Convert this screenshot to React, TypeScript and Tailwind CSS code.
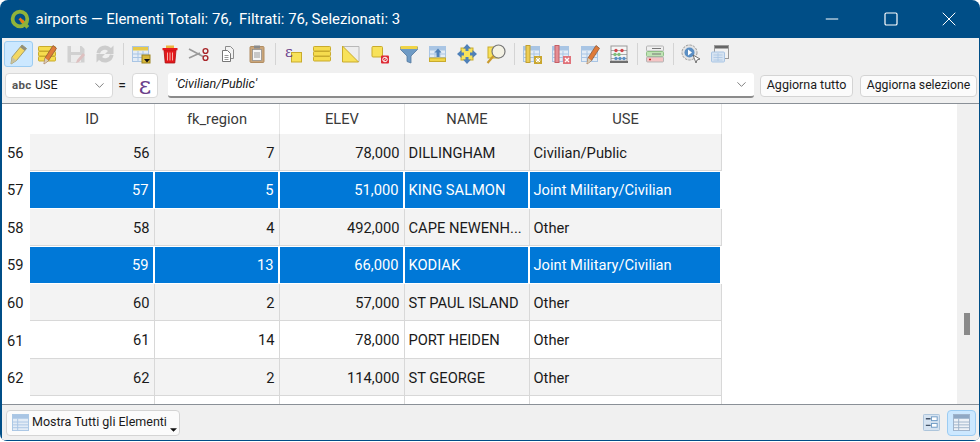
import React from 'react'
import { ChevronDown, Minus, Square, X } from 'lucide-react'

type Row = { n: number; region: number; elev: string; name: string; use: string; selected?: boolean; tint?: boolean }

const rows: Row[] = [
  { n: 56, region: 7, elev: '78,000', name: 'DILLINGHAM', use: 'Civilian/Public', tint: true },
  { n: 57, region: 5, elev: '51,000', name: 'KING SALMON', use: 'Joint Military/Civilian', selected: true },
  { n: 58, region: 4, elev: '492,000', name: 'CAPE NEWENH...', use: 'Other', tint: true },
  { n: 59, region: 13, elev: '66,000', name: 'KODIAK', use: 'Joint Military/Civilian', selected: true },
  { n: 60, region: 2, elev: '57,000', name: 'ST PAUL ISLAND', use: 'Other', tint: true },
  { n: 61, region: 14, elev: '78,000', name: 'PORT HEIDEN', use: 'Other' },
  { n: 62, region: 2, elev: '114,000', name: 'ST GEORGE', use: 'Other', tint: true },
]

const Icon: React.FC<{ children: React.ReactNode; faded?: boolean }> = ({ children, faded }) => (
  <svg viewBox="0 0 22 22" className={`h-[22px] w-[22px] ${faded ? 'opacity-25' : ''}`}>
    {children}
  </svg>
)

const Tool: React.FC<{ children: React.ReactNode; active?: boolean }> = ({ children, active }) => (
  <div className={`flex h-[26px] w-[29px] shrink-0 items-center justify-center rounded-[3px] ${active ? 'border border-[#9cccf2] bg-[#cce8ff]' : ''}`}>
    {children}
  </div>
)

const Sep = () => (
  <div className="flex w-[7px] shrink-0 justify-center">
    <div className="h-[22px] w-px bg-[#d4d4d4]" />
  </div>
)

const Pencil = () => (
  <g>
    <path d="M4 21l1-7L15 2l4.500 3.500L9.500 17.500z" fill="#f3d862" stroke="#9b9468" strokeWidth=".9" />
    <path d="M4 21l1-7 4.500 3.500z" fill="#c9c2a0" />
    <path d="M15 2l4.500 3.500-1.800 2.200-4.500-3.500z" fill="#8f8f80" />
  </g>
)

const RedPencil = () => (
  <g>
    <path d="M8 21l1-6L17 2.500l3.500 2.800-8 12.200z" fill="#e07b39" stroke="#8f5a3a" strokeWidth=".8" />
    <path d="M8 21l1-6 3.500 2.500z" fill="#d8cdb5" />
  </g>
)

const YellowRows = () => (
  <g fill="#f6dc4e" stroke="#c9ab2c" strokeWidth="1">
    <rect x="2.500" y="3.500" width="17" height="4.500" rx=".8" />
    <rect x="2.500" y="8.500" width="17" height="4.500" rx=".8" />
    <rect x="2.500" y="13.500" width="17" height="4.500" rx=".8" />
  </g>
)

const TableBase = ({ head = '#a9c5e4' }: { head?: string }) => (
  <g>
    <rect x="2.500" y="3.500" width="16" height="15" fill="#e3ecf6" stroke="#a9c5e4" />
    <rect x="3" y="4" width="15" height="3.500" fill={head} />
    <path d="M3 11h15M3 14.500h15M8 8v10M13 8v10" stroke="#a9c5e4" strokeWidth="1" />
  </g>
)

export default function App() {
  return (
    <div className="h-[442px] w-[980px] overflow-hidden bg-white font-['Roboto',sans-serif] text-[14.700px] text-[#1a1a1a]">
      <div className="flex h-[441px] w-[980px] flex-col overflow-hidden rounded-t-[8px] rounded-b-[7px] bg-[#004e87] px-[1.500px] pb-[1px]">
        {/* Title bar */}
        <div className="flex h-[38px] shrink-0 items-center text-white">
          <svg viewBox="0 0 20 20" className="ml-[8px] h-[21px] w-[21px] shrink-0">
            <circle cx="9.500" cy="9.500" r="7" fill="none" stroke="#8fb33a" strokeWidth="3.600" />
            <path d="M11 11l6 6.500" stroke="#8fb33a" strokeWidth="3.600" />
            <path d="M9 9l4 4" stroke="#ee7913" strokeWidth="2.500" />
          </svg>
          <span className="mt-[1px] ml-[5px] text-[14.950px] whitespace-pre">airports — Elementi Totali: 76,  Filtrati: 76, Selezionati: 3</span>
          <div className="ml-auto flex items-center text-white">
            <div className="flex w-[58.500px] justify-center"><Minus size={20} strokeWidth={1.200} /></div>
            <div className="flex w-[58.500px] justify-center"><Square size={16} strokeWidth={1.800} /></div>
            <div className="flex w-[58.500px] justify-center"><X size={24} strokeWidth={1} /></div>
          </div>
        </div>

        {/* Toolbar */}
        <div className="flex h-[32px] shrink-0 items-center bg-[#f0f0f0] pl-[2px]">
          <Tool active><Icon><Pencil /></Icon></Tool>
          <Tool><Icon><YellowRows /><RedPencil /></Icon></Tool>
          <Tool>
            <Icon faded>
              <path d="M2.500 3h14l3 3v13.500h-17z" fill="#777" />
              <rect x="6" y="3" width="9" height="6" fill="#eee" />
              <rect x="6" y="12" width="10" height="7" fill="#ddd" />
              <path d="M11 20l1-3 6-7 2 2-6 7z" fill="#a33" />
            </Icon>
          </Tool>
          <Tool>
            <Icon faded>
              <path d="M2.500 10a8.500 8.500 0 0 1 14.500-5l2.500-2.500V11h-8.500l3-3a4.800 4.800 0 0 0-8 2.500zM19.500 12a8.500 8.500 0 0 1-14.500 5l-2.500 2.500V11H11l-3 3a4.800 4.800 0 0 0 8-2.500z" fill="#666" />
            </Icon>
          </Tool>
          <Sep />
          <Tool>
            <Icon>
              <TableBase head="#e8c94a" />
              <rect x="12" y="12" width="8" height="8" fill="#d9b83a" stroke="#9c8420" />
              <path d="M14 16l3 3.500 3-3.500z" fill="#111" />
            </Icon>
          </Tool>
          <Tool>
            <Icon>
              <path d="M5 7h12l-1.200 13H6.200z" fill="#e4181c" stroke="#a80f12" strokeWidth=".8" />
              <path d="M8.500 9.500v8M11 9.500v8M13.500 9.500v8" stroke="#f7b0a8" strokeWidth="1" />
              <path d="M3.500 5h15v2.200h-15z" fill="#e4181c" />
              <path d="M7 2.500h8V5H7z" fill="#eeb43c" />
            </Icon>
          </Tool>
          <Tool>
            <Icon>
              <path d="M1 6l14 7.500M1 15l11-5" stroke="#9a9a9a" strokeWidth="1.700" />
              <circle cx="17.500" cy="8" r="2.400" fill="none" stroke="#a8262a" strokeWidth="1.400" />
              <circle cx="17.500" cy="15" r="2.400" fill="none" stroke="#a8262a" strokeWidth="1.400" />
            </Icon>
          </Tool>
          <Tool>
            <Icon>
              <path d="M8.500 3.500h5l3 3v9h-8z" fill="#f2f2f2" stroke="#8c8c8c" />
              <path d="M5.500 7.500h5l3 3v8h-8z" fill="#fff" stroke="#777" />
              <path d="M7.500 12.500h4M7.500 14.500h4M7.500 16.500h4" stroke="#999" />
            </Icon>
          </Tool>
          <Tool>
            <Icon>
              <rect x="4" y="3.500" width="14" height="16" rx="1" fill="#c9a57a" stroke="#b18d62" />
              <rect x="6.500" y="6.500" width="9" height="11" fill="#f5f5f5" stroke="#888" strokeWidth=".7" />
              <rect x="8" y="2.500" width="6" height="3" fill="#8a8a8a" />
              <path d="M8 10h6M8 12h6M8 14h6" stroke="#999" />
            </Icon>
          </Tool>
          <Sep />
          <Tool>
            <Icon>
              <rect x="9.500" y="9.500" width="10" height="9.500" fill="#f8e25a" stroke="#c9ab2c" />
              <text x="3" y="14" fontSize="15" fontFamily="'DejaVu Serif', serif" fill="#6b3f8a">ε</text>
            </Icon>
          </Tool>
          <Tool><Icon><YellowRows /></Icon></Tool>
          <Tool>
            <Icon>
              <path d="M3 3.500h16v15H3z" fill="#ededed" stroke="#b8b8b8" />
              <path d="M2.500 3l16 16h-16z" fill="#f8e25a" stroke="#c9ab2c" />
            </Icon>
          </Tool>
          <Tool>
            <Icon>
              <rect x="3" y="3.500" width="10.500" height="10.500" rx="1" fill="#f8e25a" stroke="#c9ab2c" />
              <rect x="12" y="12.500" width="8" height="8" rx="1" fill="#dd2a34" />
              <circle cx="16" cy="16.500" r="2.300" fill="none" stroke="#fff" />
              <path d="M14.500 18l3-3" stroke="#fff" />
            </Icon>
          </Tool>
          <Tool>
            <Icon>
              <path d="M2.500 4h17v2.500L13 13v7l-4-1.500V13L2.500 6.500z" fill="#6f9bc5" stroke="#54799e" strokeWidth=".8" />
              <rect x="2.500" y="3" width="17" height="3" fill="#f0d447" />
            </Icon>
          </Tool>
          <Tool>
            <Icon>
              <TableBase />
              <path d="M11 5.500l3.500 4H12.500v4.500h-3V9.500H7.500z" fill="#4f80b8" />
              <rect x="2.500" y="15" width="16" height="3.500" fill="#f0d447" stroke="#c9ab2c" />
            </Icon>
          </Tool>
          <Tool>
            <Icon>
              <rect x="5" y="5" width="12" height="12" fill="#f8e25a" stroke="#c9ab2c" />
              <path d="M11 1l4 4.500h-2.500V8h-3V5.500H7zM11 21l-4-4.500h2.500V14h3v2.500H15zM1 11l4.500-4v2.500H8v3H5.500V15zM21 11l-4.500 4v-2.500H14v-3h2.500V7z" fill="#4f80b8" />
            </Icon>
          </Tool>
          <Tool>
            <Icon>
              <rect x="3" y="4" width="11" height="11" fill="#f8e25a" stroke="#c9ab2c" />
              <circle cx="13.500" cy="8.500" r="6.500" fill="#f3f1e4" stroke="#777" strokeWidth="1.200" />
              <path d="M8.500 13L2.500 20" stroke="#c99a2e" strokeWidth="2.200" />
            </Icon>
          </Tool>
          <Sep />
          <Tool>
            <Icon>
              <TableBase />
              <rect x="5" y="2.500" width="4" height="17" fill="#eccd55" stroke="#c1a030" />
              <rect x="13" y="13" width="8" height="8" fill="#c9a62e" />
              <path d="M17 14.500v5M14.500 17h5M15 15l4 4M19 15l-4 4" stroke="#fff" />
            </Icon>
          </Tool>
          <Tool>
            <Icon>
              <TableBase />
              <rect x="5" y="2.500" width="4" height="17" fill="#e58e94" stroke="#c45f66" />
              <rect x="13" y="13" width="8" height="8" fill="#e0737b" />
              <path d="M15 15l4 4M19 15l-4 4" stroke="#fff" strokeWidth="1.400" />
            </Icon>
          </Tool>
          <Tool><Icon><TableBase /><RedPencil /></Icon></Tool>
          <Tool>
            <Icon>
              <rect x="3" y="3" width="16" height="15" fill="#f5f5f5" stroke="#999" />
              <path d="M3 7.500h16M3 11.500h16M3 15.500h16" stroke="#888" strokeWidth=".7" />
              <circle cx="8" cy="7.500" r="1.700" fill="#d0454a" /><circle cx="14" cy="7.500" r="1.700" fill="#d0454a" />
              <circle cx="7" cy="11.500" r="1.700" fill="#7fbf7a" /><circle cx="11" cy="11.500" r="1.700" fill="#7fbf7a" />
              <circle cx="8" cy="15.500" r="1.700" fill="#5c92c7" /><circle cx="12" cy="15.500" r="1.700" fill="#5c92c7" /><circle cx="16" cy="15.500" r="1.700" fill="#5c92c7" />
              <rect x="2" y="18" width="18" height="2" fill="#6e6e6e" />
            </Icon>
          </Tool>
          <Sep />
          <Tool>
            <Icon>
              <rect x="2.500" y="3" width="17" height="5" rx="1" fill="#f0f0f0" stroke="#b5b5b5" />
              <rect x="2.500" y="8.500" width="17" height="5" rx="1" fill="#bfe3b4" stroke="#8fbe86" />
              <rect x="2.500" y="14" width="17" height="5" rx="1" fill="#f4c4c4" stroke="#b5b5b5" />
              <path d="M8 5.500h9M8 11h9" stroke="#777" strokeWidth="1.200" /><path d="M5 16.500h2" stroke="#c4262c" strokeWidth="1.500" />
            </Icon>
          </Tool>
          <Sep />
          <Tool>
            <Icon>
              <circle cx="9.500" cy="9.500" r="7.500" fill="#e4e4e4" stroke="#9a9a9a" strokeDasharray="2.500 1" />
              <circle cx="9.500" cy="9.500" r="5" fill="#5b8fc4" />
              <path d="M8 6.500l4 3-4 3z" fill="#fff" />
              <path d="M13 12l7 4-3 1-1 3z" fill="#fff" stroke="#555" strokeWidth=".8" />
            </Icon>
          </Tool>
          <Tool>
            <Icon>
              <rect x="5.500" y="2.500" width="14" height="13" fill="#f2f2f2" stroke="#9a9a9a" />
              <rect x="6" y="3" width="13" height="2.500" fill="#666" />
              <rect x="2.500" y="9" width="13" height="10" rx="1" fill="#d6e3f1" stroke="#a9c5e4" />
              <path d="M4.500 12h9M4.500 14.500h9M4.500 17h9M9 10v8" stroke="#a9c5e4" strokeWidth=".8" />
            </Icon>
          </Tool>
        </div>

        {/* Field update row */}
        <div className="flex h-[33px] shrink-0 items-center bg-[#f0f0f0] pt-[3px] pb-[5px] pl-[3.500px] text-[12.500px]">
          <div className="flex h-[25px] w-[108px] items-center rounded-[4px] border border-[#d9d9d9] bg-white pr-[5px] pl-[6px]">
            <span className="text-[11.500px] font-bold tracking-[0.3px] text-[#555]">abc</span>
            <span className="ml-[3.500px] text-[12.500px]">USE</span>
            <ChevronDown size={15} strokeWidth={1.200} className="ml-auto text-[#555]" />
          </div>
          <span className="ml-[4px] w-[10px] text-center text-[14px]">=</span>
          <div className="ml-[5px] flex h-[25px] w-[26px] items-center justify-center rounded-[4px] border border-[#d9d9d9] bg-white font-['DejaVu_Serif',serif] text-[24px] leading-none text-[#6b3f8a]">ε</div>
          <div className="ml-[10px] flex h-[25px] w-[586px] items-center rounded-[3px] border-b-2 border-[#8b8b8b] bg-white pr-[5px] pl-[7px] text-[12.600px] italic">
            'Civilian/Public'
            <ChevronDown size={15} strokeWidth={1.200} className="ml-auto text-[#555]" />
          </div>
          <div className="ml-[6px] flex h-[22px] w-[93px] items-center justify-center rounded-[4px] border border-[#d4d4d4] bg-[#fbfbfb]">Aggiorna tutto</div>
          <div className="ml-[7px] flex h-[22px] w-[117px] items-center justify-center rounded-[4px] border border-[#d4d4d4] bg-[#fbfbfb] text-[12.200px]">Aggiorna selezione</div>
        </div>

        {/* Attribute table */}
        <div className="flex min-h-0 flex-1 flex-col overflow-hidden border-y border-[#8a9097] bg-white">
          <div className="flex min-h-0 flex-1">
            <div className="min-w-0 flex-1 overflow-hidden">
              <div className="flex h-[29.500px] text-center text-[#3a3a3a]">
                <div className="w-[28.500px] shrink-0" />
                {['ID', 'fk_region', 'ELEV', 'NAME'].map(h => (
                  <div key={h} className="flex w-[125px] shrink-0 items-center justify-center border-r border-[#e6e6e6]">{h}</div>
                ))}
                <div className="flex w-[192px] shrink-0 items-center justify-center border-r border-[#e6e6e6]">USE</div>
              </div>
              {rows.map(r => {
                const cell = `flex items-center pr-[4.500px] pl-[3.500px] ${
                  r.selected
                    ? 'border-y border-r-2 border-white bg-[#0078d7] text-white'
                    : `border-r border-b border-[#d8d8d8] pt-[2px] ${r.tint ? 'bg-[#f3f3f3]' : 'bg-white'}`
                }`
                return (
                  <div key={r.n} className="flex h-[37.500px]">
                    <div className={`flex w-[28.500px] shrink-0 items-center pl-[5.500px] ${r.selected ? '' : 'pt-[2px]'}`}>{r.n}</div>
                    <div className={`${cell} w-[125px] shrink-0 justify-end`}>{r.n}</div>
                    <div className={`${cell} w-[125px] shrink-0 justify-end`}>{r.region}</div>
                    <div className={`${cell} w-[125px] shrink-0 justify-end`}>{r.elev}</div>
                    <div className={`${cell} w-[125px] shrink-0`}>{r.name}</div>
                    <div className={`${cell} w-[192px] shrink-0`}>{r.use}</div>
                  </div>
                )
              })}
              <div className="flex h-[9px]">
                <div className="w-[28.500px] shrink-0" />
                {['a', 'b', 'c', 'd'].map(k => (
                  <div key={k} className="w-[125px] shrink-0 border-r border-[#d8d8d8]" />
                ))}
                <div className="w-[192px] shrink-0 border-r border-[#d8d8d8]" />
              </div>
            </div>
            <div className="w-[22px] shrink-0 bg-[#f0f0f0] pt-[209px]">
              <div className="ml-[7px] h-[22px] w-[6px] bg-[#8a8a8a]" />
            </div>
          </div>
        </div>

        {/* Footer */}
        <div className="flex h-[35px] shrink-0 items-center bg-[#f0f0f0] pr-[3px] pl-[4.500px]">
          <div className="flex h-[26px] w-[174px] items-center rounded-[4px] border border-[#d4d4d4] bg-[#fbfbfb] pl-[5px] text-[12.500px]">
            <svg viewBox="0 0 18 18" className="h-[17px] w-[17px] shrink-0">
              <rect x=".5" y=".5" width="17" height="17" fill="#e3ecf6" stroke="#a9c5e4" />
              <rect x="1" y="1" width="16" height="4" fill="#a9c5e4" />
              <path d="M1 8.500h16M1 11.500h16M1 14.500h16M6 5v12" stroke="#a9c5e4" />
            </svg>
            <span className="ml-[3px]">Mostra Tutti gli Elementi</span>
            <svg viewBox="0 0 8 4" className="mt-[14px] ml-[3px] h-[4px] w-[7px]"><path d="M0 0h8L4 4z" fill="#111" /></svg>
          </div>
          <div className="ml-auto flex items-center gap-[6.500px]">
            <svg viewBox="0 0 18 18" className="h-[17px] w-[17px]">
              <rect x=".5" y=".5" width="17" height="17" rx="1" fill="#d6e3f1" stroke="#a9c1da" />
              <rect x="9" y="3" width="6" height="4" fill="#fff" stroke="#6f9bc5" />
              <rect x="9" y="10" width="6" height="4" fill="#fff" stroke="#6f9bc5" />
              <path d="M3 5h5M3 12h5" stroke="#44546a" strokeWidth="1.400" />
            </svg>
            <div className="flex h-[26px] w-[29px] items-center justify-center rounded-[4px] border border-[#9cccf2] bg-[#cce8ff]">
              <svg viewBox="0 0 18 18" className="h-[17px] w-[17px]">
                <rect x=".5" y=".5" width="17" height="17" fill="#eef2f7" stroke="#9db2c9" />
                <rect x="1" y="1" width="16" height="4" fill="#8fa8c4" />
                <path d="M1 8.500h16M1 11.500h16M1 14.500h16M6 5v12" stroke="#9db2c9" />
              </svg>
            </div>
          </div>
        </div>
      </div>
    </div>
  )
}
